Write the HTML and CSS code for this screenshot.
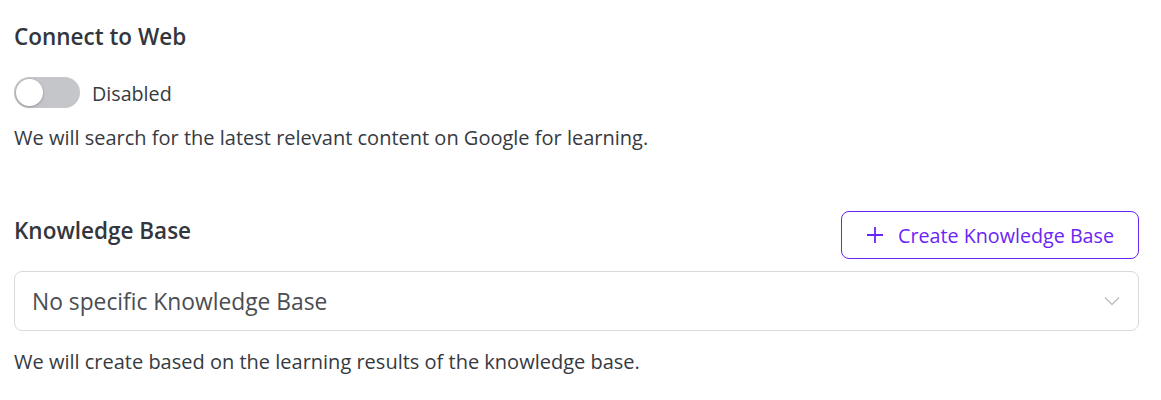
FILE: index.html
```html
<!DOCTYPE html>
<html>
<head>
<meta charset="utf-8">
<link rel="stylesheet" href="styles.css">
</head>
<body>
<div class="page">
  <section class="web">
    <h2 class="title">Connect to Web</h2>
    <div class="toggle-row">
      <span class="switch"><span class="knob"></span></span>
      <span class="toggle-label">Disabled</span>
    </div>
    <p class="desc desc-web">We will search for the latest relevant content on Google for learning.</p>
  </section>
  <section class="kb">
    <div class="kb-head">
      <h2 class="title kb-title">Knowledge Base</h2>
      <button class="create-btn">
        <svg class="plus" width="18" height="18" viewBox="0 0 18 18"><path d="M9 1v16M1 9h16" stroke="currentColor" stroke-width="1.8" fill="none"/></svg>
        <span>Create Knowledge Base</span>
      </button>
    </div>
    <div class="select">
      <span class="select-text">No specific Knowledge Base</span>
      <svg class="chev" width="16" height="10" viewBox="0 0 16 10"><path d="M1 1.5l7 7 7-7" stroke="#bdbdbd" stroke-width="1.3" fill="none"/></svg>
    </div>
    <p class="desc desc-kb">We will create based on the learning results of the knowledge base.</p>
  </section>
</div>
</body>
</html>
```
FILE: styles.css
```css
html, body {
  margin: 0;
  padding: 0;
  background: #ffffff;
}
body {
  font-family: "Open Sans", "Noto Sans", sans-serif;
  color: #363a41;
}
.page {
  width: 1125px;
  padding: 22px 0 0 14px;
}
.title {
  margin: 0;
  font-size: 22.5px;
  line-height: 30px;
  font-weight: 600;
  color: #33363c;
}
.toggle-row {
  display: flex;
  align-items: center;
  gap: 12px;
  margin-top: 24px;
  height: 32px;
}
.switch {
  width: 66px;
  height: 31px;
  border-radius: 16px;
  background: #c5c6ca;
  display: flex;
  align-items: center;
  padding-left: 2px;
  box-sizing: border-box;
}
.knob {
  width: 27px;
  height: 27px;
  border-radius: 50%;
  background: #fff;
  box-shadow: 0 1px 3px rgba(0,0,0,0.25);
}
.toggle-label {
  font-size: 19.7px;
  line-height: 28px;
  padding-top: 3px;
}
.desc {
  margin: 0;
  font-size: 20px;
  line-height: 28px;
}
.desc-web {
  margin-top: 16px;
}
.kb {
  margin-top: 59px;
}
.kb-head {
  display: flex;
  justify-content: space-between;
  align-items: flex-start;
}
.kb-title {
  margin-top: 5px;
}
.create-btn {
  display: flex;
  align-items: center;
  gap: 14px;
  height: 48px;
  padding: 0 24px;
  border: 1px solid #6a24f5;
  border-radius: 8px;
  background: #fff;
  color: #6a24f5;
  font-family: inherit;
  font-size: 19.7px;
}
.plus {
  display: block;
}
.select {
  margin-top: 12px;
  height: 60px;
  box-sizing: border-box;
  border: 1px solid #dadada;
  border-radius: 8px;
  display: flex;
  align-items: center;
  justify-content: space-between;
  padding: 0 18px 0 17px;
}
.select-text {
  font-size: 22.8px;
  color: #4a4d52;
}
.chev {
  display: block;
}
.desc-kb {
  margin-top: 17px;
}
```
